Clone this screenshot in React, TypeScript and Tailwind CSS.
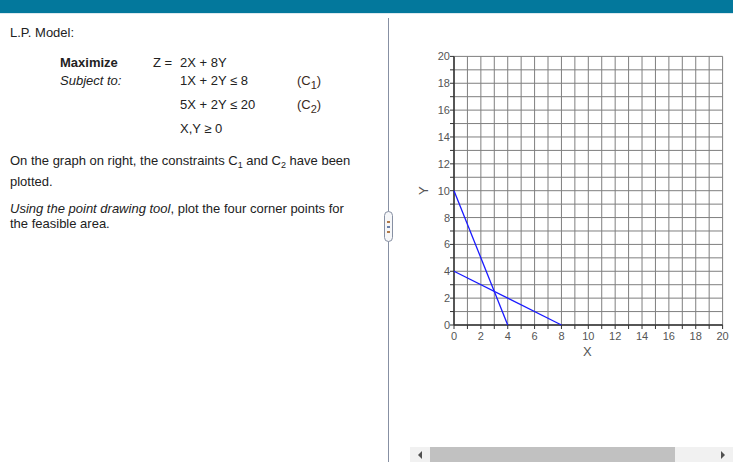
import React from "react";

const U = 268.6 / 20;
const OX = 65;
const OY = 311;
const px = (x: number) => OX + x * U;
const py = (y: number) => OY - y * U;

function Graph() {
  const steps = Array.from({ length: 21 }, (_, i) => i);
  return (
    <svg width="344" height="433" className="block">
      {steps.map((i) => (
        <line key={"v" + i} x1={px(i)} y1={py(0)} x2={px(i)} y2={py(20)} stroke="#7f7f7f" strokeWidth="1" />
      ))}
      {steps.map((i) => (
        <line key={"h" + i} x1={px(0)} y1={py(i)} x2={px(20)} y2={py(i)} stroke="#7f7f7f" strokeWidth="1" />
      ))}
      {steps.map((i) => (
        <line key={"ty" + i} x1={px(0) - 4} y1={py(i)} x2={px(0)} y2={py(i)} stroke="#333" strokeWidth="1" />
      ))}
      {steps.map((i) => (
        <line key={"tx" + i} x1={px(i)} y1={py(0)} x2={px(i)} y2={py(0) + 4} stroke="#333" strokeWidth="1" />
      ))}
      <line x1={px(0)} y1={py(0)} x2={px(0)} y2={py(20)} stroke="#333" strokeWidth="1.5" />
      <line x1={px(0)} y1={py(0)} x2={px(20)} y2={py(0)} stroke="#333" strokeWidth="1.5" />
      {steps
        .filter((i) => i % 2 === 0)
        .map((i) => (
          <text key={"ly" + i} x={px(0) - 4} y={py(i) + 4} textAnchor="end" fontSize="11" fill="#555" fontFamily="'Liberation Sans', Arial, sans-serif">
            {i}
          </text>
        ))}
      {steps
        .filter((i) => i % 2 === 0)
        .map((i) => (
          <text key={"lx" + i} x={px(i)} y={py(0) + 15} textAnchor="middle" fontSize="11" fill="#555" fontFamily="'Liberation Sans', Arial, sans-serif">
            {i}
          </text>
        ))}
      <text x={px(10) - 1} y={py(0) + 31} textAnchor="middle" fontSize="13" fill="#555" fontFamily="'Liberation Sans', Arial, sans-serif">
        X
      </text>
      <text x="0" y="0" transform={`translate(39 ${py(10)}) rotate(-90)`} textAnchor="middle" fontSize="13" fill="#555" fontFamily="'Liberation Sans', Arial, sans-serif">
        Y
      </text>
      <line x1={px(0)} y1={py(4)} x2={px(8)} y2={py(0)} stroke="#1a1aff" strokeWidth="1.3" />
      <line x1={px(0)} y1={py(10)} x2={px(4)} y2={py(0)} stroke="#1a1aff" strokeWidth="1.3" />
    </svg>
  );
}

function Sub({ children }: { children: React.ReactNode }) {
  return <span className="text-[11px] leading-none relative top-[4px]">{children}</span>;
}

function SmallSub({ children }: { children: React.ReactNode }) {
  return <span className="text-[9px] leading-none relative top-[3px]">{children}</span>;
}

export default function App() {
  return (
    <div className="w-[733px] h-[462px] overflow-hidden bg-white text-[#222] text-[13px] font-['Liberation_Sans',Arial,sans-serif] relative">
      <div className="h-[13px] bg-[#03789c]" />
      <div className="h-px bg-[#dbe9ef]" />
      <div className="flex h-[448px]">
        {/* question text */}
        <div className="w-[388px] pl-[10px] pt-[11px]">
          <div className="leading-[16px]">L.P. Model:</div>
          <div className="ml-[50px] mt-[13px] grid grid-cols-[93px_27px_117px_auto] leading-[18px]">
            <div className="font-bold">Maximize</div>
            <div>Z =</div>
            <div>2X + 8Y</div>
            <div />
            <div className="italic">Subject to:</div>
            <div />
            <div>1X + 2Y ≤ 8</div>
            <div className="text-[#3b2a1a]">
              (C<Sub>1</Sub>)
            </div>
            <div className="mt-[6px]" />
            <div className="mt-[6px]" />
            <div className="mt-[6px]">5X + 2Y ≤ 20</div>
            <div className="mt-[6px] text-[#3b2a1a]">
              (C<Sub>2</Sub>)
            </div>
            <div className="mt-[6px]" />
            <div className="mt-[6px]" />
            <div className="mt-[6px]">X,Y ≥ 0</div>
            <div className="mt-[6px]" />
          </div>
          <p className="w-[352px] mt-[12px] leading-[21px]">
            On the graph on right, the constraints C<SmallSub>1</SmallSub> and C<SmallSub>2</SmallSub> have been plotted.
          </p>
          <p className="w-[352px] mt-[9px] leading-[15px]">
            <span className="italic">Using the point drawing tool</span>, plot the four corner points for the feasible area.
          </p>
        </div>

        {/* divider */}
        <div className="w-px bg-[#8790a3] mt-[4px] relative">
          <div className="absolute left-[-4px] top-[193px] w-[9px] h-[31px] rounded-full border border-[#8790a3] bg-[#f6f7f9] flex flex-col items-center justify-center gap-[3px]">
            <div className="w-[3px] h-[2px] bg-[#b07a4a]" />
            <div className="w-[3px] h-[2px] bg-[#6a7fa8]" />
            <div className="w-[3px] h-[2px] bg-[#b07a4a]" />
          </div>
        </div>

        {/* graph panel */}
        <div className="flex-1 flex flex-col overflow-hidden">
          <div className="flex-1 overflow-hidden">
            <Graph />
          </div>
          <div className="ml-[21px] h-[15px] bg-[#f1f1f1] flex items-center">
            <div className="w-[20px] h-full flex items-center justify-center">
              <svg width="6" height="8">
                <polygon points="5,0 5,8 1,4" fill="#505050" />
              </svg>
            </div>
            <div className="w-[245px] h-full bg-[#c1c1c1]" />
            <div className="flex-1" />
            <div className="w-[20px] h-full flex items-center justify-center">
              <svg width="6" height="8">
                <polygon points="1,0 1,8 5,4" fill="#505050" />
              </svg>
            </div>
          </div>
        </div>
      </div>
    </div>
  );
}
